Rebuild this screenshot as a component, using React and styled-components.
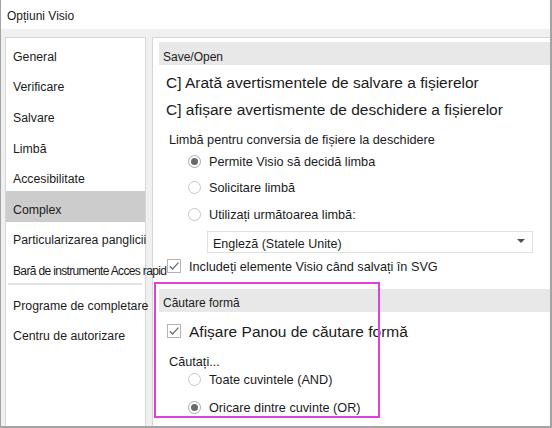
import React from "react";
import styled, { createGlobalStyle } from "styled-components";

const Global = createGlobalStyle`
  html, body {
    margin: 0;
    padding: 0;
    background: #ffffff;
  }
  body {
    font-family: "Liberation Sans", Arial, sans-serif;
    color: #1b1b1b;
  }
`;

const Window = styled.div`
  width: 552px;
  height: 428px;
  box-sizing: border-box;
  border: 2px solid #a4a4a4;
  border-top: none;
  border-left-width: 1px;
  display: flex;
  flex-direction: column;
  background: #f0f0f0;
  overflow: hidden;
`;

const TitleBar = styled.div`
  height: 29px;
  flex: none;
  box-sizing: border-box;
  display: flex;
  align-items: center;
  padding: 3px 0 0 6px;
  background: #ffffff;
  font-size: 12px;
`;

const Body = styled.div`
  flex: 1;
  min-height: 0;
  display: flex;
  gap: 6px;
  padding: 8px 0 0 4px;
`;

const Nav = styled.div`
  width: 141px;
  flex: none;
  box-sizing: border-box;
  background: #ffffff;
  border: 1px solid #d6d6d6;
  border-bottom: none;
  position: relative;
  z-index: 1;
`;

const NavItem = styled.div`
  height: 30.6px;
  box-sizing: border-box;
  display: flex;
  align-items: center;
  padding: 7px 0 0 7px;
  font-size: ${(p) => (p.$tight ? "12px" : "12.3px")};
  letter-spacing: ${(p) => (p.$tight ? "-0.65px" : "0")};
  white-space: nowrap;
  background: ${(p) => (p.$active ? "#cccccc" : "transparent")};
`;

const NavDivider = styled.div`
  height: 2px;
  margin: 0 3px 2px 2px;
  background: #e2e2e2;
`;

const Panel = styled.div`
  flex: 1;
  min-width: 0;
  box-sizing: border-box;
  background: #ffffff;
  border: 1px solid #d6d6d6;
  border-right: none;
  border-bottom: none;
  padding: 4px 0 0 6px;
  display: flex;
  flex-direction: column;
`;

const SectionHeader = styled.div`
  height: 23px;
  flex: none;
  box-sizing: border-box;
  display: flex;
  align-items: center;
  padding: 6px 0 0 4px;
  background: #e8e8e8;
  font-size: 12px;
  margin-top: ${(p) => p.$mt || 0}px;
`;

const BigLine = styled.div`
  height: 27px;
  box-sizing: border-box;
  display: flex;
  align-items: center;
  padding: 4px 0 0 7px;
  font-size: 15.5px;
  white-space: nowrap;
  margin-top: ${(p) => p.$mt || 0}px;
`;

const Label = styled.div`
  height: ${(p) => p.$h || 22}px;
  box-sizing: border-box;
  display: flex;
  align-items: center;
  padding: ${(p) => p.$pt ?? 3}px 0 0 10px;
  font-size: 12.7px;
  white-space: nowrap;
  margin-top: ${(p) => p.$mt || 0}px;
`;

const OptionRow = styled.label`
  height: ${(p) => p.$h}px;
  box-sizing: border-box;
  display: flex;
  align-items: center;
  gap: 8px;
  padding-left: ${(p) => p.$indent}px;
  font-size: ${(p) => (p.$big ? "15.5px" : "12.7px")};
  white-space: nowrap;
  margin-top: ${(p) => p.$mt || 0}px;
  > span:last-child {
    padding-top: 3px;
  }
`;

const RadioGroup = styled.div`
  display: flex;
  flex-direction: column;
  gap: ${(p) => p.$gap || 0}px;
`;

const RadioDot = styled.span`
  width: 13px;
  height: 13px;
  flex: none;
  box-sizing: border-box;
  border-radius: 50%;
  border: 1px solid ${(p) => (p.$on ? "#a8a8a8" : "#c6c6c6")};
  background: #ffffff;
  display: flex;
  align-items: center;
  justify-content: center;
  margin-top: 2px;
  &::after {
    content: "";
    width: 7px;
    height: 7px;
    border-radius: 50%;
    background: ${(p) => (p.$on ? "#6a6a6a" : "transparent")};
  }
`;

const CheckBox = styled.span`
  width: 14px;
  height: 14px;
  flex: none;
  box-sizing: border-box;
  border: 1px solid #b4b4b4;
  background: #ffffff;
  display: flex;
  align-items: center;
  justify-content: center;
  margin-top: 1px;
  svg {
    display: block;
  }
`;

const Select = styled.div`
  width: 326px;
  height: 22px;
  box-sizing: border-box;
  margin: 4px 0 0 48px;
  border: 1px solid #e0e0e0;
  display: flex;
  align-items: center;
  justify-content: space-between;
  padding: 5px 7px 0 5px;
  font-size: 12.5px;
  white-space: nowrap;
`;

const Arrow = styled.span`
  width: 0;
  height: 0;
  border-left: 4px solid transparent;
  border-right: 4px solid transparent;
  border-top: 4px solid #505050;
  margin-top: -6px;
`;

const Section = styled.div`
  position: relative;
  display: flex;
  flex-direction: column;
`;

const Highlight = styled.div`
  position: absolute;
  left: -5px;
  top: 3px;
  width: 226px;
  height: 136px;
  box-sizing: border-box;
  border: 2px solid #e03fe0;
  pointer-events: none;
`;

const Radio = ({ on, children, h = 26.5, indent = 29 }) => (
  <OptionRow $h={h} $indent={indent}>
    <RadioDot $on={on} />
    <span>{children}</span>
  </OptionRow>
);

const Check = ({ children, big, mt }) => (
  <OptionRow $h={26} $indent={8} $big={big} $mt={mt}>
    <CheckBox>
      <svg width="12" height="12" viewBox="0 0 12 12">
        <path d="M1.8 6.2 L4.6 9 L10.4 2.6" fill="none" stroke="#6e6e6e" strokeWidth="1.3" />
      </svg>
    </CheckBox>
    <span>{children}</span>
  </OptionRow>
);

const navItems = [
  "General",
  "Verificare",
  "Salvare",
  "Limbă",
  "Accesibilitate",
  "Complex",
  "Particularizarea panglicii",
];

export default function App() {
  return (
    <>
      <Global />
      <Window>
        <TitleBar>Opțiuni Visio</TitleBar>
        <Body>
          <Nav>
            {navItems.map((item) => (
              <NavItem key={item} $active={item === "Complex"}>
                {item}
              </NavItem>
            ))}
            <NavItem $tight>Bară de instrumente Acces rapid</NavItem>
            <NavDivider />
            <NavItem>Programe de completare</NavItem>
            <NavItem>Centru de autorizare</NavItem>
          </Nav>
          <Panel>
            <SectionHeader>Save/Open</SectionHeader>
            <BigLine $mt={2}>C] Arată avertismentele de salvare a fișierelor</BigLine>
            <BigLine>C] afișare avertismente de deschidere a fișierelor</BigLine>
            <Label $mt={4} $pt={7}>
              Limbă pentru conversia de fișiere la deschidere
            </Label>
            <RadioGroup>
              <Radio on>Permite Visio să decidă limba</Radio>
              <Radio>Solicitare limbă</Radio>
              <Radio>Utilizați următoarea limbă:</Radio>
            </RadioGroup>
            <Select>
              Engleză (Statele Unite)
              <Arrow />
            </Select>
            <Check>Includeți elemente Visio când salvați în SVG</Check>
            <Section>
              <Highlight />
              <SectionHeader $mt={10}>Căutare formă</SectionHeader>
              <Check big mt={6}>
                Afișare Panou de căutare formă
              </Check>
              <Label $mt={7} $h={16} $pt={7}>
                Căutați...
              </Label>
              <RadioGroup $gap={4}>
                <Radio h={24}>Toate cuvintele (AND)</Radio>
                <Radio h={24} on>
                  Oricare dintre cuvinte (OR)
                </Radio>
              </RadioGroup>
            </Section>
          </Panel>
        </Body>
      </Window>
    </>
  );
}
